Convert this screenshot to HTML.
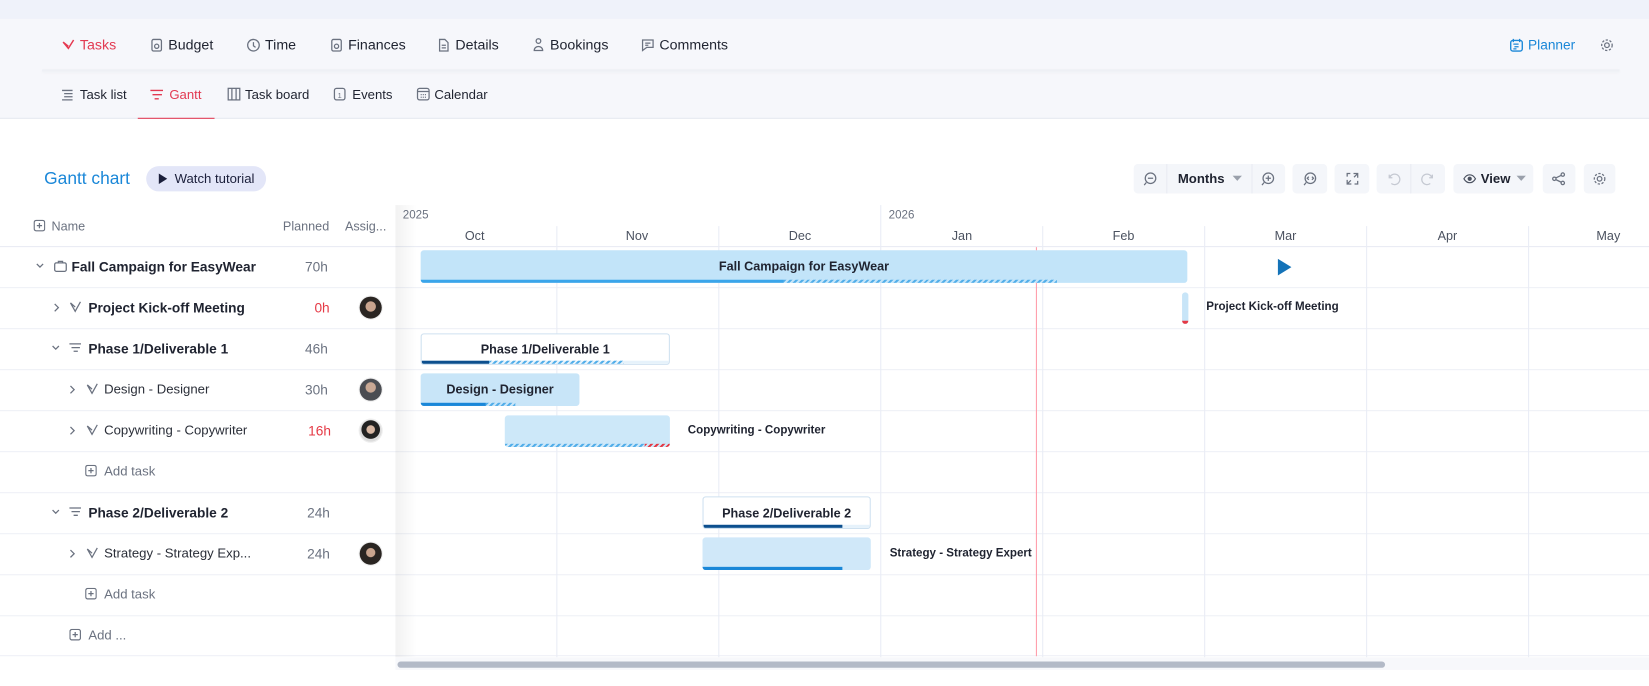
<!DOCTYPE html>
<html><head><meta charset="utf-8"><style>
*{box-sizing:border-box;margin:0;padding:0}
body{width:1649px;height:686px;overflow:hidden;background:#fff;font-family:"Liberation Sans",sans-serif;color:#1f2330}
#w{position:absolute;left:0;top:0;width:1568px;height:652px;transform:scale(1.05166);transform-origin:0 0}
.a{position:absolute}
.t{position:absolute;white-space:nowrap;font-size:13px}
.ln{position:absolute;background:#e8ebf3}
.vl{position:absolute;width:1px;background:#e9ecf5;top:195px;height:430px}
.bar{position:absolute;border-radius:3px;overflow:hidden}
.hatch{background:repeating-linear-gradient(135deg,#52aee9 0 2px,transparent 2px 4px)}
.hatchr{background:repeating-linear-gradient(135deg,#e53945 0 2px,transparent 2px 4px)}
.btn{position:absolute;top:156px;height:28px;background:#f4f6fa;border-radius:4px}
svg{position:absolute}
.ic{stroke:#6b7280;fill:none;stroke-width:1.2}
</style></head><body><div id="w">
<div class="a" style="left:0;top:0;width:1568px;height:18px;background:#eff2fa"></div>
<div class="a" style="left:0;top:18px;width:1568px;height:95px;background:#f6f7fb;border-bottom:1px solid #e6e9f0"></div>
<div class="a" style="left:40px;top:66px;width:1500px;height:2px;background:#eef0f5;box-shadow:0 1px 3px rgba(0,0,0,.04)"></div>
<svg style="left:58px;top:36px" width="14" height="14"><path d="M2 4l5 6 5-8M2 4l5 4" stroke="#e53950" stroke-width="1.4" fill="none"/></svg>
<div class="t" style="left:76px;top:35px;font-size:13.5px;color:#e23a52">Tasks</div>
<svg style="left:143px;top:36px" width="12" height="14"><rect x="1.5" y="1.5" width="9" height="11" rx="1.5" class="ic"/><circle cx="6" cy="8" r="2" class="ic"/></svg>
<div class="t" style="left:160px;top:35px;font-size:13.5px">Budget</div>
<svg style="left:234px;top:36px" width="14" height="14"><circle cx="7" cy="7" r="5.5" class="ic"/><path d="M7 4v3.5l2 1.5" class="ic"/></svg>
<div class="t" style="left:252px;top:35px;font-size:13.5px">Time</div>
<svg style="left:314px;top:36px" width="12" height="14"><rect x="1.5" y="1.5" width="9" height="11" rx="1.5" class="ic"/><circle cx="6" cy="8" r="2" class="ic"/></svg>
<div class="t" style="left:331px;top:35px;font-size:13.5px">Finances</div>
<svg style="left:416px;top:36px" width="12" height="14"><path d="M2 1.5h5l3 3v8H2z M4 7h4M4 9.5h4" class="ic"/></svg>
<div class="t" style="left:433px;top:35px;font-size:13.5px">Details</div>
<svg style="left:506px;top:35px" width="12" height="15"><circle cx="6" cy="4" r="2.2" class="ic"/><path d="M2 13c0-5 8-5 8 0z" class="ic"/></svg>
<div class="t" style="left:523px;top:35px;font-size:13.5px">Bookings</div>
<svg style="left:609px;top:36px" width="14" height="14"><path d="M2 2h10v7H6l-4 3z M4.5 5h5M4.5 7h3" class="ic"/></svg>
<div class="t" style="left:627px;top:35px;font-size:13.5px">Comments</div>
<svg style="left:1435px;top:36px" width="14" height="14"><rect x="1.5" y="2.5" width="11" height="10" rx="2" stroke="#1a87d8" fill="none" stroke-width="1.3"/><path d="M4 1v3M10 1v3M4 6h5M5 8.5h4M4 10.5h3" stroke="#1a87d8" stroke-width="1.2"/></svg>
<div class="t" style="left:1453px;top:35px;color:#1a87d8">Planner</div>
<svg style="left:1521px;top:36px" width="14" height="14"><circle cx="7" cy="7" r="2.2" class="ic"/><circle cx="7" cy="7" r="5" class="ic" stroke-dasharray="2.2 1.5"/></svg>
<svg style="left:58px;top:84px" width="12" height="12"><path d="M1 2h10M3 5h8M3 8h8M1 11h10" class="ic"/></svg>
<div class="t" style="left:76px;top:83px;font-size:12.5px">Task list</div>
<svg style="left:142px;top:84px" width="14" height="12"><path d="M1 2h12M3 6h9M5 10h4" stroke="#e23a52" stroke-width="1.3" fill="none"/></svg>
<div class="t" style="left:161px;top:83px;font-size:12.5px;color:#e23a52">Gantt</div>
<div class="a" style="left:131px;top:112px;width:73px;height:1px;background:#e23a52"></div>
<svg style="left:216px;top:83px" width="13" height="13"><rect x="1" y="1" width="11" height="11" class="ic"/><path d="M4.5 1v11M8.5 1v11" class="ic"/></svg>
<div class="t" style="left:233px;top:83px;font-size:12.5px">Task board</div>
<svg style="left:317px;top:82px" width="12" height="14"><rect x="1" y="2" width="10" height="11" rx="2" class="ic"/><text x="4" y="11" font-size="7" fill="#6b7280" font-family="Liberation Sans">1</text></svg>
<div class="t" style="left:335px;top:83px;font-size:12.5px">Events</div>
<svg style="left:396px;top:82px" width="13" height="14"><rect x="1" y="2" width="11" height="11" rx="2" class="ic"/><path d="M1 5h11M4 8h1M6 8h1M8 8h1M4 10.5h1M6 10.5h1M8 10.5h1" class="ic"/></svg>
<div class="t" style="left:413px;top:83px;font-size:12.5px">Calendar</div>
<div class="t" style="left:42px;top:161px;font-size:16.5px;color:#1a87d8">Gantt chart</div>
<div class="a" style="left:139px;top:158px;width:114px;height:24px;background:#e3e6f8;border-radius:12px"></div>
<svg style="left:150px;top:165px" width="10" height="10"><path d="M1 0l8 5-8 5z" fill="#1b1f3b"/></svg>
<div class="t" style="left:166px;top:163px;font-size:12.5px;color:#1b1f3b">Watch tutorial</div>
<div class="btn" style="left:1078px;width:144px"></div>
<div class="a" style="left:1109px;top:156px;width:1px;height:28px;background:#e8ebf2"></div>
<div class="a" style="left:1190px;top:156px;width:1px;height:28px;background:#e8ebf2"></div>
<svg style="left:1087px;top:163px" width="14" height="14"><circle cx="7" cy="6.5" r="5" class="ic"/><path d="M4.5 6.5h5M3 10.5l-2 2.5" class="ic"/></svg>
<div class="t" style="left:1120px;top:163px;font-weight:bold;font-size:12.5px">Months</div>
<svg style="left:1172px;top:167px" width="9" height="6"><path d="M0 0h9l-4.5 5z" fill="#9aa0ab"/></svg>
<svg style="left:1199px;top:163px" width="14" height="14"><circle cx="7" cy="6.5" r="5" class="ic"/><path d="M4.5 6.5h5M7 4v5M3 10.5l-2 2.5" class="ic"/></svg>
<div class="btn" style="left:1229px;width:33px"></div>
<svg style="left:1239px;top:163px" width="14" height="14"><circle cx="7" cy="6.5" r="5" class="ic"/><path d="M5.5 5l-1.5 1.5 1.5 1.5M8.5 5l1.5 1.5-1.5 1.5M3 10.5l-2 2.5" class="ic"/></svg>
<div class="btn" style="left:1269px;width:33px"></div>
<svg style="left:1279px;top:163px" width="14" height="14"><path d="M8 2h4v4M12 2L8.5 5.5M6 12H2V8M2 12l3.5-3.5M2 5V2h3M12 9v3H9" class="ic"/></svg>
<div class="btn" style="left:1309px;width:65px"></div>
<div class="a" style="left:1341px;top:156px;width:1px;height:28px;background:#e8ebf2"></div>
<svg style="left:1318px;top:163px" width="14" height="14"><path d="M3 3v3h3M3.3 6A5 5 0 1 1 5 11.5" stroke="#c5c9d2" fill="none" stroke-width="1.2"/></svg>
<svg style="left:1351px;top:163px" width="14" height="14"><path d="M11 3v3H8M10.7 6A5 5 0 1 0 9 11.5" stroke="#c5c9d2" fill="none" stroke-width="1.2"/></svg>
<div class="btn" style="left:1382px;width:76px"></div>
<svg style="left:1391px;top:165px" width="13" height="10"><path d="M1 5c3-5 8-5 11 0c-3 5-8 5-11 0z" fill="none" stroke="#4b5260" stroke-width="1.1"/><circle cx="6.5" cy="5" r="2" fill="#4b5260"/></svg>
<div class="t" style="left:1408px;top:163px;font-weight:bold;font-size:12.5px">View</div>
<svg style="left:1442px;top:167px" width="9" height="6"><path d="M0 0h9l-4.5 5z" fill="#9aa0ab"/></svg>
<div class="btn" style="left:1467px;width:31px"></div>
<svg style="left:1475px;top:163px" width="14" height="14"><circle cx="11" cy="3" r="1.6" class="ic"/><circle cx="3" cy="7" r="1.6" class="ic"/><circle cx="11" cy="11" r="1.6" class="ic"/><path d="M4.4 6.2l5.2-2.5M4.4 7.8l5.2 2.5" class="ic"/></svg>
<div class="btn" style="left:1506px;width:30px"></div>
<svg style="left:1514px;top:163px" width="14" height="14"><circle cx="7" cy="7" r="2.2" class="ic"/><circle cx="7" cy="7" r="5" class="ic" stroke-dasharray="2.2 1.5"/></svg>
<div class="ln" style="left:0;top:234px;width:1568px;height:1px"></div>
<div class="ln" style="left:0;top:273px;width:1568px;height:1px;background:#eef0f6"></div>
<div class="ln" style="left:0;top:312px;width:1568px;height:1px;background:#eef0f6"></div>
<div class="ln" style="left:0;top:351px;width:1568px;height:1px;background:#eef0f6"></div>
<div class="ln" style="left:0;top:390px;width:1568px;height:1px;background:#eef0f6"></div>
<div class="ln" style="left:0;top:429px;width:1568px;height:1px;background:#eef0f6"></div>
<div class="ln" style="left:0;top:468px;width:1568px;height:1px;background:#eef0f6"></div>
<div class="ln" style="left:0;top:507px;width:1568px;height:1px;background:#eef0f6"></div>
<div class="ln" style="left:0;top:546px;width:1568px;height:1px;background:#eef0f6"></div>
<div class="ln" style="left:0;top:585px;width:1568px;height:1px;background:#eef0f6"></div>
<div class="ln" style="left:0;top:623px;width:1568px;height:1px;background:#eef0f6"></div>
<div class="vl" style="left:529px;top:215px;height:410px"></div>
<div class="vl" style="left:683px;top:215px;height:410px"></div>
<div class="vl" style="left:837px"></div>
<div class="vl" style="left:991px;top:215px;height:410px"></div>
<div class="vl" style="left:1145px;top:215px;height:410px"></div>
<div class="vl" style="left:1299px;top:215px;height:410px"></div>
<div class="vl" style="left:1453px;top:215px;height:410px"></div>
<div class="t" style="left:383px;top:199px;font-size:11px;color:#6b7280">2025</div>
<div class="t" style="left:845px;top:199px;font-size:11px;color:#6b7280">2026</div>
<div class="t" style="left:442px;top:217px;font-size:12px;color:#4b5260">Oct</div>
<div class="t" style="left:595px;top:217px;font-size:12px;color:#4b5260">Nov</div>
<div class="t" style="left:750px;top:217px;font-size:12px;color:#4b5260">Dec</div>
<div class="t" style="left:905px;top:217px;font-size:12px;color:#4b5260">Jan</div>
<div class="t" style="left:1058px;top:217px;font-size:12px;color:#4b5260">Feb</div>
<div class="t" style="left:1212px;top:217px;font-size:12px;color:#4b5260">Mar</div>
<div class="t" style="left:1367px;top:217px;font-size:12px;color:#4b5260">Apr</div>
<div class="t" style="left:1518px;top:217px;font-size:12px;color:#4b5260">May</div>
<div class="a" style="left:985px;top:235px;width:1px;height:389px;background:#ff9aa8"></div>
<div class="a" style="left:376px;top:195px;width:20px;height:430px;background:linear-gradient(90deg,rgba(0,0,0,.05),rgba(0,0,0,0))"></div>
<svg style="left:32px;top:209px" width="11" height="11"><rect x="0.5" y="0.5" width="10" height="10" rx="2" class="ic"/><path d="M3 5.5h5M5.5 3v5" class="ic"/></svg>
<div class="t" style="left:49px;top:208px;font-size:12px;color:#6b7280">Name</div>
<div class="t" style="left:269px;top:208px;font-size:12px;color:#6b7280">Planned</div>
<div class="t" style="left:328px;top:208px;font-size:12px;color:#6b7280">Assig...</div>
<svg style="left:34px;top:250px" width="8" height="6"><path d="M1 1l3 3 3-3" class="ic"/></svg>
<svg style="left:51px;top:247px" width="13" height="12"><rect x="1" y="3" width="11" height="8" rx="1.5" class="ic"/><path d="M4.5 3V1.5h4V3" class="ic"/></svg>
<div class="t" style="left:68px;top:246px;font-weight:bold;font-size:13px">Fall Campaign for EasyWear</div>
<div class="t" style="left:290px;top:246px;color:#6b7280">70h</div>
<svg style="left:51px;top:288px" width="6" height="9"><path d="M1 1l3.5 3.5L1 8" class="ic"/></svg>
<svg style="left:65px;top:286px" width="13" height="12"><path d="M2 2l4.5 8 5-9M2 2l4.5 4" class="ic"/></svg>
<div class="t" style="left:84px;top:285px;font-weight:bold;font-size:13px">Project Kick-off Meeting</div>
<div class="t" style="left:299px;top:285px;color:#e53945">0h</div>
<div class="a" style="left:342px;top:282px;width:21px;height:21px;border-radius:50%;background:radial-gradient(circle at 50% 45%,#c9a48e 0 30%,#2a2522 33%);box-shadow:0 0 0 1px #eee"></div>
<svg style="left:49px;top:328px" width="8" height="6"><path d="M1 1l3 3 3-3" class="ic"/></svg>
<svg style="left:65px;top:325px" width="13" height="11"><path d="M1 2h11M3 5.5h8M5 9h4" class="ic"/></svg>
<div class="t" style="left:84px;top:324px;font-weight:bold;font-size:13px">Phase 1/Deliverable 1</div>
<div class="t" style="left:290px;top:324px;color:#6b7280">46h</div>
<svg style="left:66px;top:366px" width="6" height="9"><path d="M1 1l3.5 3.5L1 8" class="ic"/></svg>
<svg style="left:81px;top:364px" width="13" height="12"><path d="M2 2l4.5 8 5-9M2 2l4.5 4" class="ic"/></svg>
<div class="t" style="left:99px;top:363px;font-size:12.5px;color:#2a2e38">Design - Designer</div>
<div class="t" style="left:290px;top:363px;color:#6b7280">30h</div>
<div class="a" style="left:342px;top:360px;width:21px;height:21px;border-radius:50%;background:radial-gradient(circle at 50% 40%,#c9a894 0 28%,#4b4d52 32%);box-shadow:0 0 0 1px #eee"></div>
<svg style="left:66px;top:405px" width="6" height="9"><path d="M1 1l3.5 3.5L1 8" class="ic"/></svg>
<svg style="left:81px;top:403px" width="13" height="12"><path d="M2 2l4.5 8 5-9M2 2l4.5 4" class="ic"/></svg>
<div class="t" style="left:99px;top:402px;font-size:12.5px;color:#2a2e38">Copywriting - Copywriter</div>
<div class="t" style="left:293px;top:402px;color:#e53945">16h</div>
<div class="a" style="left:342px;top:399px;width:21px;height:21px;border-radius:50%;background:radial-gradient(circle at 50% 45%,#d8b8a4 0 24%,#222 28% 55%,#ddd 58%);box-shadow:0 0 0 1px #eee"></div>
<svg style="left:81px;top:442px" width="11" height="11"><rect x="0.5" y="0.5" width="10" height="10" rx="2" class="ic"/><path d="M3 5.5h5M5.5 3v5" class="ic"/></svg>
<div class="t" style="left:99px;top:441px;font-size:12.5px;color:#6b7280">Add task</div>
<svg style="left:49px;top:484px" width="8" height="6"><path d="M1 1l3 3 3-3" class="ic"/></svg>
<svg style="left:65px;top:481px" width="13" height="11"><path d="M1 2h11M3 5.5h8M5 9h4" class="ic"/></svg>
<div class="t" style="left:84px;top:480px;font-weight:bold;font-size:13px">Phase 2/Deliverable 2</div>
<div class="t" style="left:292px;top:480px;color:#6b7280">24h</div>
<svg style="left:66px;top:522px" width="6" height="9"><path d="M1 1l3.5 3.5L1 8" class="ic"/></svg>
<svg style="left:81px;top:520px" width="13" height="12"><path d="M2 2l4.5 8 5-9M2 2l4.5 4" class="ic"/></svg>
<div class="t" style="left:99px;top:519px;font-size:12.5px;color:#2a2e38">Strategy - Strategy Exp...</div>
<div class="t" style="left:292px;top:519px;color:#6b7280">24h</div>
<div class="a" style="left:342px;top:516px;width:21px;height:21px;border-radius:50%;background:radial-gradient(circle at 50% 45%,#c9a48e 0 26%,#2a2522 30%);box-shadow:0 0 0 1px #eee"></div>
<svg style="left:81px;top:559px" width="11" height="11"><rect x="0.5" y="0.5" width="10" height="10" rx="2" class="ic"/><path d="M3 5.5h5M5.5 3v5" class="ic"/></svg>
<div class="t" style="left:99px;top:558px;font-size:12.5px;color:#6b7280">Add task</div>
<svg style="left:66px;top:598px" width="11" height="11"><rect x="0.5" y="0.5" width="10" height="10" rx="2" class="ic"/><path d="M3 5.5h5M5.5 3v5" class="ic"/></svg>
<div class="t" style="left:84px;top:597px;font-size:12.5px;color:#6b7280">Add ...</div>
<div class="bar" style="left:400px;top:238px;width:729px;height:31px;background:#c2e4f9">
 <div class="a" style="left:0;bottom:0;width:345px;height:3px;background:#3aa5ea"></div>
 <div class="a hatch" style="left:345px;bottom:0;width:260px;height:3px"></div>
 <div class="t" style="left:0;width:729px;text-align:center;top:8px;font-weight:bold;font-size:12px">Fall Campaign for EasyWear</div>
</div>
<svg style="left:1215px;top:246px" width="13" height="16"><path d="M0 0l13 8-13 8z" fill="#1473b8"/></svg>
<div class="bar" style="left:1124px;top:278px;width:6px;height:30px;background:#c8e5f8"><div class="a" style="left:0;bottom:0;width:6px;height:3px;background:#e53945"></div></div>
<div class="t" style="left:1147px;top:286px;font-weight:bold;font-size:11px">Project Kick-off Meeting</div>
<div class="bar" style="left:400px;top:317px;width:237px;height:30px;background:#fff;border:1px solid #cfe1f0">
 <div class="a" style="left:0;bottom:0;width:235px;height:3px;background:#e6f2fb"></div>
 <div class="a" style="left:0;bottom:0;width:64px;height:3px;background:#0c4f8e"></div>
 <div class="a hatch" style="left:64px;bottom:0;width:128px;height:3px"></div>
 <div class="t" style="left:0;width:235px;text-align:center;top:7px;font-weight:bold;font-size:12px">Phase 1/Deliverable 1</div>
</div>
<div class="bar" style="left:400px;top:355px;width:151px;height:31px;background:#c8e5f8">
 <div class="a" style="left:0;bottom:0;width:62px;height:3px;background:#1a87d8"></div>
 <div class="a hatch" style="left:62px;bottom:0;width:28px;height:3px"></div>
 <div class="t" style="left:0;width:151px;text-align:center;top:8px;font-weight:bold;font-size:12px">Design - Designer</div>
</div>
<div class="bar" style="left:480px;top:395px;width:157px;height:30px;background:#cde8f9">
 <div class="a hatch" style="left:0;bottom:0;width:133px;height:3px"></div>
 <div class="a hatchr" style="left:133px;bottom:0;width:24px;height:3px"></div>
</div>
<div class="t" style="left:654px;top:403px;font-weight:bold;font-size:11px">Copywriting - Copywriter</div>
<div class="bar" style="left:668px;top:472px;width:160px;height:31px;background:#fff;border:1px solid #cfe1f0">
 <div class="a" style="left:0;bottom:0;width:158px;height:3px;background:#e6f2fb"></div>
 <div class="a" style="left:0;bottom:0;width:132px;height:3px;background:#0c4f8e"></div>
 <div class="t" style="left:0;width:158px;text-align:center;top:8px;font-weight:bold;font-size:12px">Phase 2/Deliverable 2</div>
</div>
<div class="bar" style="left:668px;top:511px;width:160px;height:31px;background:#d0e8f9">
 <div class="a" style="left:0;bottom:0;width:133px;height:3px;background:#1a87d8"></div>
</div>
<div class="t" style="left:846px;top:520px;font-weight:bold;font-size:11px">Strategy - Strategy Expert</div>
<div class="a" style="left:376px;top:625px;width:1192px;height:12px;background:#f7f8fb"></div>
<div class="a" style="left:378px;top:629px;width:939px;height:6px;border-radius:3px;background:#b3bac7"></div>
</div></body></html>
